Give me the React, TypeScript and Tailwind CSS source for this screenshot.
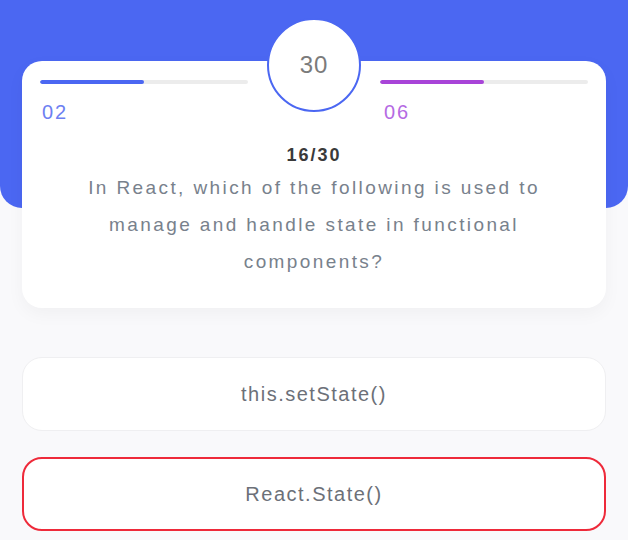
import React from 'react'

type Option = {
  label: string,
  wrong?: boolean
}

const options: Option[] = [
  { label: 'this.setState()' },
  { label: 'React.State()', wrong: true },
]

const ProgressBar = ({ fill, color }: { fill: number, color: string }) => (
  <div className="h-[4px] w-[208px] rounded-full bg-[#ececec] overflow-hidden">
    <div className={`h-full rounded-full ${color}`} style={{ width: `${fill}%` }} />
  </div>
)

const App = () => {
  return (
    <div className="w-full min-h-[540px] bg-[#f9f9fb] font-['Liberation_Sans',Arial,sans-serif] overflow-hidden">
      {/* Header */}
      <div className="h-[208px] w-full bg-[#4b67f2] rounded-b-[22px]" />

      {/* Question card */}
      <div className="relative mx-[22px] -mt-[147px] h-[247px] bg-white rounded-[20px] shadow-[0_6px_18px_rgba(0,0,0,0.04)] pt-[19px] px-[18px]">
        <div className="absolute left-1/2 -translate-x-1/2 -top-[43px] w-[94px] h-[94px] rounded-full bg-white border-2 border-[#4b67f2] flex items-center justify-center">
          <span className="text-[24px] text-[#7b7b7b] tracking-[1px]">30</span>
        </div>

        <div className="flex justify-between">
          <div className="flex flex-col gap-[17px]">
            <ProgressBar fill={50} color="bg-[#4b67f2]" />
            <span className="pl-[2px] text-[20px] leading-[22px] text-[#6d80f2] tracking-[2px]">02</span>
          </div>
          <div className="flex flex-col gap-[17px]">
            <ProgressBar fill={50} color="bg-[#a844d8]" />
            <span className="pl-[4px] text-[20px] leading-[22px] text-[#b56ae3] tracking-[2px]">06</span>
          </div>
        </div>

        <div className="mt-[22px] flex flex-col items-center text-center">
          <span className="text-[18px] leading-[20px] text-[#3a3a3a] font-semibold tracking-[2px]">16/30</span>
          <p className="mt-[4px] px-[40px] text-[19px] leading-[37px] tracking-[2.4px] text-[#78818c]">
            In React, which of the following is used to manage and handle state in functional components?
          </p>
        </div>
      </div>

      {/* Answers */}
      <div className="mx-[22px] mt-[49px] flex flex-col gap-[26px]">
        {options.map(option => (
          <div
            key={option.label}
            className={`h-[74px] rounded-[20px] bg-white flex items-center justify-center ${option.wrong ? 'border-2 border-[#ee2a3a]' : 'border border-[#efeff1]'}`}
          >
            <span className="text-[20px] text-[#6c7078] tracking-[1.5px]">{option.label}</span>
          </div>
        ))}
      </div>
    </div>
  )
}

export default App
